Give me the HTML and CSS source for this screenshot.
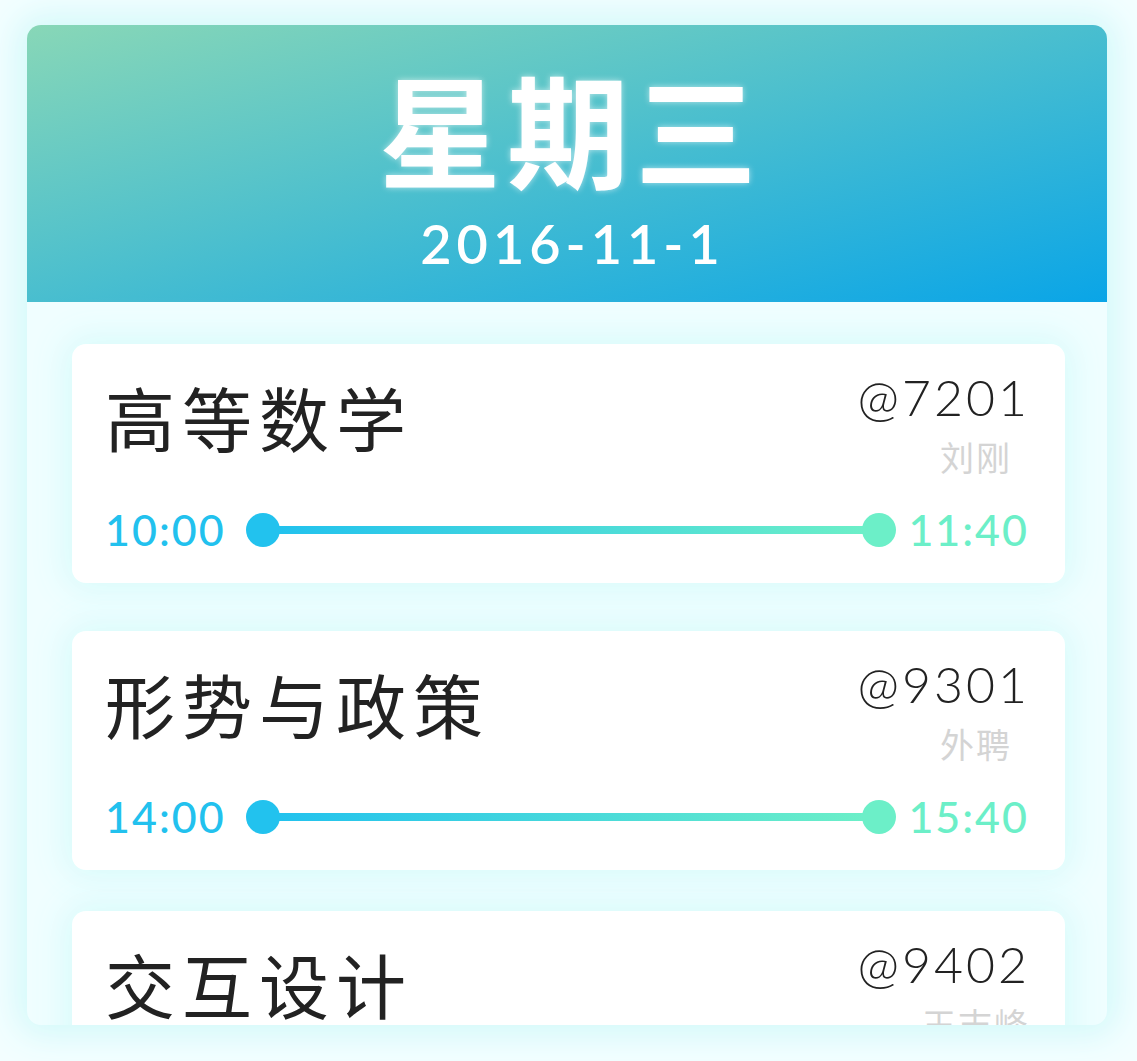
FILE: index.html
```html
<!DOCTYPE html>
<html lang="zh-CN">
<head>
<meta charset="utf-8">
<title>星期三</title>
<link rel="stylesheet" href="styles.css">
</head>
<body>
<div class="panel">
  <header class="head">
    <div class="weekday">星期三</div>
    <div class="date">2016-11-1</div>
  </header>
  <main class="list">
    <section class="card">
      <div class="top">
        <div class="course">高等数学</div>
        <div class="meta">
          <div class="room">@7201</div>
          <div class="teacher">刘刚</div>
        </div>
      </div>
      <div class="time">
        <span class="t start">10:00</span>
        <div class="track"><i class="dot dot-a"></i><i class="line"></i><i class="dot dot-b"></i></div>
        <span class="t end">11:40</span>
      </div>
    </section>
    <section class="card">
      <div class="top">
        <div class="course">形势与政策</div>
        <div class="meta">
          <div class="room">@9301</div>
          <div class="teacher">外聘</div>
        </div>
      </div>
      <div class="time">
        <span class="t start">14:00</span>
        <div class="track"><i class="dot dot-a"></i><i class="line"></i><i class="dot dot-b"></i></div>
        <span class="t end">15:40</span>
      </div>
    </section>
    <section class="card card-last">
      <div class="top">
        <div class="course">交互设计</div>
        <div class="meta">
          <div class="room">@9402</div>
          <div class="teacher">王志峰</div>
        </div>
      </div>
      <div class="time">
        <span class="t start">16:00</span>
        <div class="track"><i class="dot dot-a"></i><i class="line"></i><i class="dot dot-b"></i></div>
        <span class="t end">17:40</span>
      </div>
    </section>
  </main>
</div>
</body>
</html>
```

FILE: styles.css
```css
* { box-sizing: border-box; }
html, body {
  margin: 0;
  padding: 0;
  background: #f3feff;
}
body {
  width: 1137px;
  height: 1061px;
  overflow: hidden;
  padding: 25px 30px 0 27px;
  font-family: "Noto Sans CJK SC", "Noto Sans", sans-serif;
}
.panel {
  height: 1000px;
  border-radius: 14px;
  overflow: hidden;
  background: #f0feff;
  box-shadow: 0 0 34px 10px #d2f9fa;
}
.head {
  height: 277px;
  background: linear-gradient(to bottom right, #88d7b7, #0aa5e7);
  color: #fff;
  text-align: center;
  padding-top: 36px;
}
.weekday {
  font-size: 122px;
  line-height: 130px;
  font-weight: 700;
  letter-spacing: 6px;
  padding-left: 8px;
  text-shadow: 0 0 6px rgba(255,255,255,0.6);
}
.date {
  margin-top: 23px;
  font-family: "Lato", "Noto Sans", sans-serif;
  font-size: 54px;
  line-height: 60px;
  font-weight: 600;
  letter-spacing: 5px;
  padding-left: 11px;
}
.list {
  padding: 42px 42px 0 45px;
}
.card {
  height: 239px;
  background: #fff;
  border-radius: 14px;
  padding: 0 38px 0 33px;
  box-shadow: 0 0 34px 8px #d8fbfb;
  display: flex;
  flex-direction: column;
}
.card + .card { margin-top: 48px; }
.card-last { margin-top: 41px !important; }
.top {
  height: 166px;
  display: flex;
  justify-content: space-between;
  align-items: flex-start;
}
.course {
  margin-top: 33px;
  font-size: 70px;
  line-height: 80px;
  font-weight: 400;
  letter-spacing: 7px;
  color: #222;
}
.meta {
  padding-top: 23px;
  display: flex;
  flex-direction: column;
  align-items: flex-end;
}
.room {
  font-family: "Lato", "Noto Sans", sans-serif;
  font-size: 50px;
  line-height: 60px;
  font-weight: 300;
  letter-spacing: 3px;
  margin-right: -3px;
  color: #222;
}
.teacher {
  width: 140px;
  margin-top: 10px;
  margin-right: -18px;
  text-align: center;
  font-size: 34px;
  line-height: 40px;
  color: #d4d4d4;
  letter-spacing: 2px;
  padding-left: 2px;
}
.time {
  height: 40px;
  display: flex;
  align-items: center;
  gap: 20px;
}
.t {
  font-family: "Lato", "Noto Sans", sans-serif;
  font-size: 43px;
  line-height: 40px;
  font-weight: 500;
  letter-spacing: 2px;
}
.start { color: #22c1ee; }
.end { color: #6cefc8; margin-left: -8px; margin-right: -2px; }
.track {
  flex: 1;
  display: flex;
  align-items: center;
}
.dot {
  width: 34px;
  height: 34px;
  border-radius: 50%;
  flex: none;
}
.dot-a { background: #22c2ee; }
.dot-b { background: #6cefc8; }
.line {
  flex: 1;
  height: 8px;
  margin: 0 -2px;
  background: linear-gradient(to right, #22c2ee, #6cefc8);
}
```
